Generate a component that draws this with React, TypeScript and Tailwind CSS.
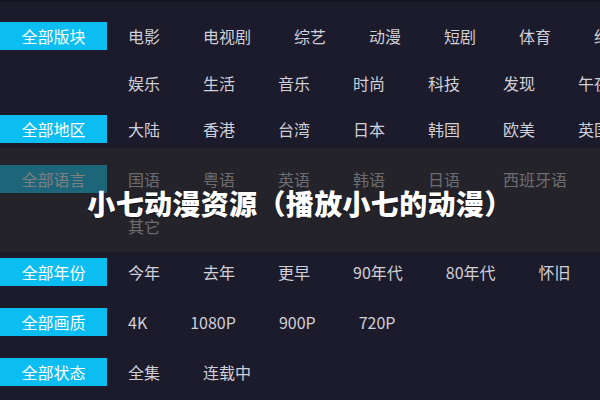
import React from "react";

type Group = { label: string; lines: string[][] };

const groups: Group[] = [
  {
    label: "全部版块",
    lines: [
      ["电影", "电视剧", "综艺", "动漫", "短剧", "体育", "纪录"],
      ["娱乐", "生活", "音乐", "时尚", "科技", "发现", "午夜"],
    ],
  },
  { label: "全部地区", lines: [["大陆", "香港", "台湾", "日本", "韩国", "欧美", "英国"]] },
  {
    label: "全部语言",
    lines: [["国语", "粤语", "英语", "韩语", "日语", "西班牙语"], ["其它"]],
  },
  { label: "全部年份", lines: [["今年", "去年", "更早", "90年代", "80年代", "怀旧"]] },
  { label: "全部画质", lines: [["4K", "1080P", "900P", "720P"]] },
  { label: "全部状态", lines: [["全集", "连载中"]] },
];

export default function App() {
  return (
    <div
      className="relative w-[600px] h-[400px] overflow-hidden bg-[#1c1b2b]"
      style={{ fontFamily: '"Noto Sans CJK SC", "Noto Sans", sans-serif' }}
    >
      <div className="h-[2px] bg-[#13131d]" />
      <div className="flex flex-col pt-[11px] w-[800px]">
        {groups.map((g) => (
          <div key={g.label} className="flex min-h-[50px]">
            <div className="w-[107px] shrink-0 pt-[9px]">
              <div className="h-[28px] bg-[#0bbdf1] text-white text-[16px] leading-[28px] text-center">
                {g.label}
              </div>
            </div>
            <div className="flex flex-col pl-[21px]">
              {g.lines.map((line, i) => (
                <div
                  key={i}
                  className="flex gap-x-[43px] h-[46.5px] items-center whitespace-nowrap text-[16px] text-[#cfcfd8]"
                >
                  {line.map((t) => (
                    <span key={t}>{t}</span>
                  ))}
                </div>
              ))}
            </div>
          </div>
        ))}
      </div>
      <div className="absolute left-0 right-0 top-[148px] h-[104px] bg-[rgba(42,42,42,0.6)] flex items-center justify-center">
        <span className="text-white text-[28px] font-black leading-none tracking-[0.35px] mt-[6px] [text-shadow:0_1px_2px_rgba(0,0,0,0.4)]">
          小七动漫资源（播放小七的动漫）
        </span>
      </div>
    </div>
  );
}
